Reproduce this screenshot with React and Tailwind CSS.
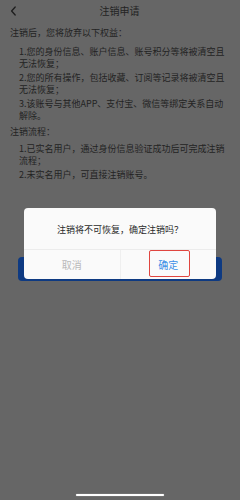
export default function App() {
  const font = { fontFamily: '"Noto Sans CJK SC", "Noto Sans", sans-serif' };
  return (
    <div
      className="relative w-[240px] h-[500px] bg-[#666666] overflow-hidden flex flex-col text-[#232323]"
      style={font}
    >
      {/* header */}
      <div className="relative h-[22px] flex items-center justify-center shrink-0">
        <svg
          className="absolute left-[10px] top-[6px]"
          width="7"
          height="10"
          viewBox="0 0 7 10"
          fill="none"
        >
          <path d="M5.2 1 L1.6 5 L5.2 9" stroke="#1e1e1e" strokeWidth="1.3" strokeLinecap="round" strokeLinejoin="round" />
        </svg>
        <span className="text-[10px] leading-[12px] -ml-[1px]">注销申请</span>
      </div>

      {/* content */}
      <div className="pl-[10px] text-[9px] leading-[12px] whitespace-nowrap">
        <div className="mt-[5px]">注销后，您将放弃以下权益：</div>
        <div className="mt-[7px] pl-[9px] flex flex-col gap-[2px]">
          <div>
            1.您的身份信息、账户信息、账号积分等将被清空且
            <br />
            无法恢复；
          </div>
          <div>
            2.您的所有操作，包括收藏、订阅等记录将被清空且
            <br />
            无法恢复；
          </div>
          <div>
            3.该账号与其他APP、支付宝、微信等绑定关系自动
            <br />
            解除。
          </div>
        </div>
        <div className="mt-[4px]">注销流程：</div>
        <div className="mt-[5px] pl-[9px] flex flex-col gap-[2px]">
          <div>
            1.已实名用户，通过身份信息验证成功后可完成注销
            <br />
            流程；
          </div>
          <div>2.未实名用户，可直接注销账号。</div>
        </div>
      </div>

      {/* dimmed button behind dialog */}
      <div className="mt-[76px] mx-[18px] h-[24px] rounded-[4px] bg-[#0e3a82] shrink-0" />

      {/* home indicator */}
      <div className="mt-auto mb-[4px] mx-auto w-[88px] h-[2px] rounded-full bg-white shadow-[0_0_1px_#cfcfcf]" />

      {/* dialog */}
      <div className="absolute left-[24px] top-[208px] w-[192px] h-[71px] rounded-[4px] bg-[#fafafa] flex flex-col">
        <div className="h-[41px] flex items-center justify-center text-[9px] text-[#2a2a2a] pt-[2px]">
          注销将不可恢复，确定注销吗？
        </div>
        <div className="flex-1 flex border-t border-[#ececec]">
          <div className="flex-1 flex items-center justify-center text-[10px] text-[#b9b9b9] border-r border-[#efefef]">
            取消
          </div>
          <div className="relative flex-1 flex items-center justify-center text-[10px] text-[#3b8ee6]">
            确定
            <div className="absolute left-[28px] top-0 w-[41px] h-[27px] border border-[#e0453f] rounded-[2px]" />
          </div>
        </div>
      </div>
    </div>
  );
}
